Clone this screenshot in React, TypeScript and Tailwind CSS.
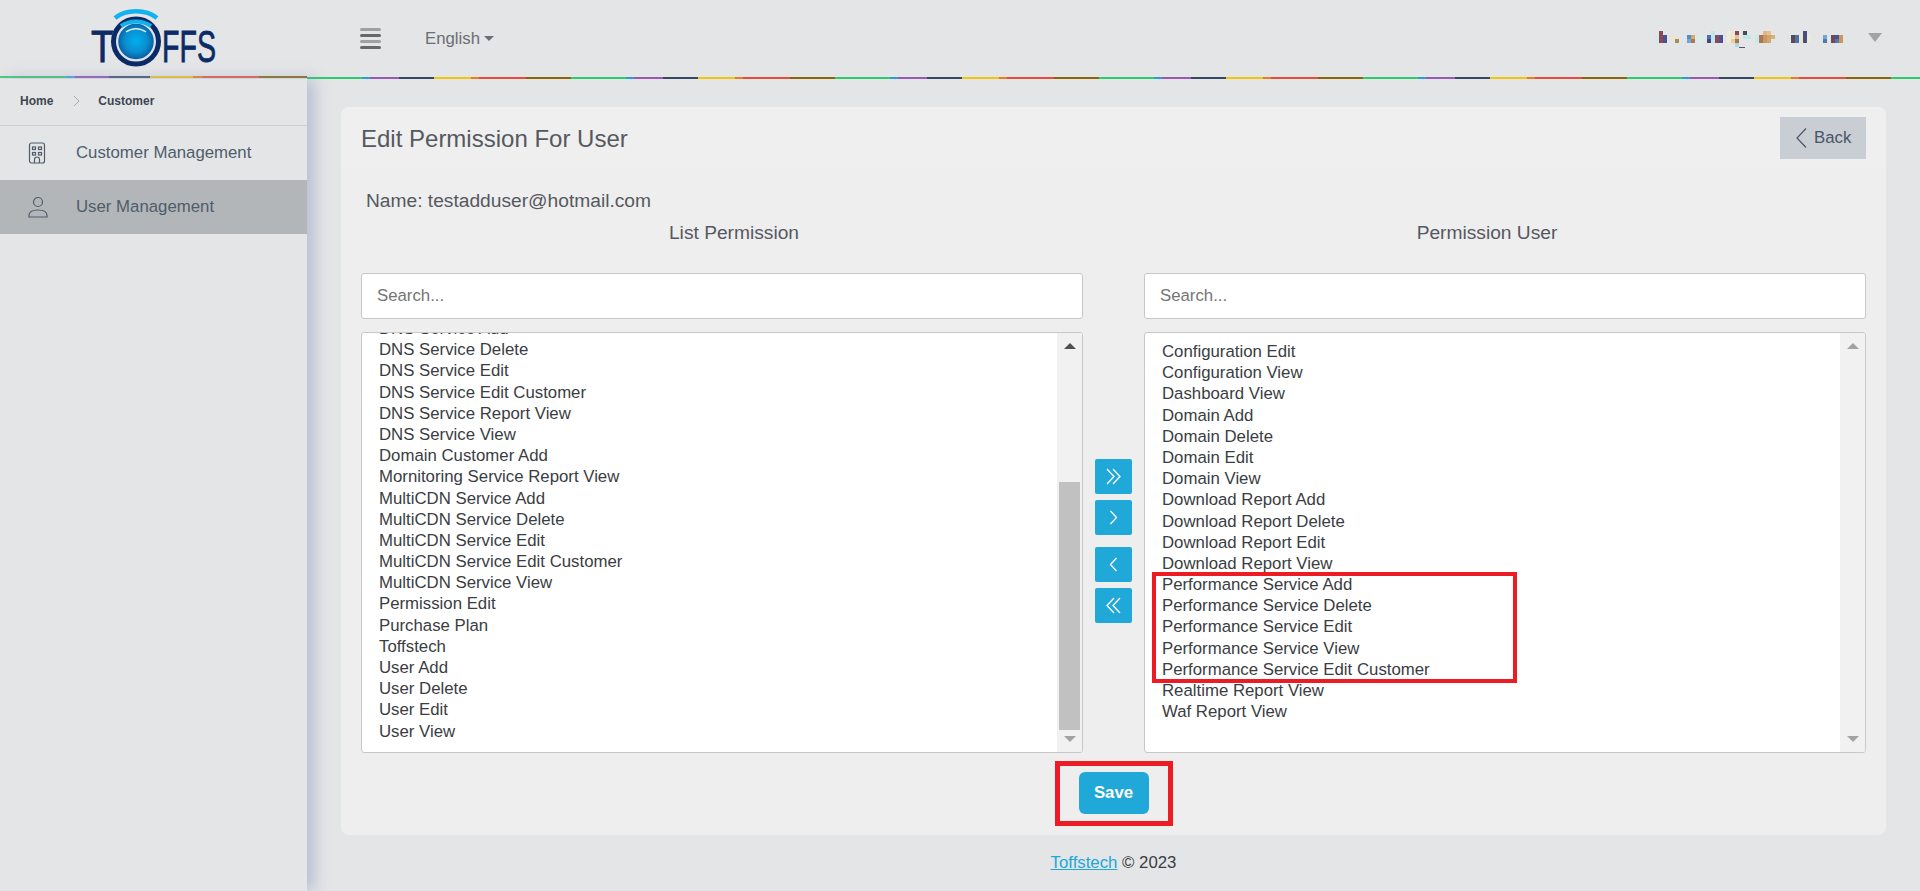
const leftItems = [
  "DNS Service Add",
  "DNS Service Delete",
  "DNS Service Edit",
  "DNS Service Edit Customer",
  "DNS Service Report View",
  "DNS Service View",
  "Domain Customer Add",
  "Mornitoring Service Report View",
  "MultiCDN Service Add",
  "MultiCDN Service Delete",
  "MultiCDN Service Edit",
  "MultiCDN Service Edit Customer",
  "MultiCDN Service View",
  "Permission Edit",
  "Purchase Plan",
  "Toffstech",
  "User Add",
  "User Delete",
  "User Edit",
  "User View",
];

const rightItems = [
  "Configuration Edit",
  "Configuration View",
  "Dashboard View",
  "Domain Add",
  "Domain Delete",
  "Domain Edit",
  "Domain View",
  "Download Report Add",
  "Download Report Delete",
  "Download Report Edit",
  "Download Report View",
  "Performance Service Add",
  "Performance Service Delete",
  "Performance Service Edit",
  "Performance Service View",
  "Performance Service Edit Customer",
  "Realtime Report View",
  "Waf Report View",
];

// blurred-out user name in the header: x, y, height, colour (each block 4px wide)
const mosaic: [number, number, number, string][] = [
  [0, 4, 8, "#d5eae8"], [4, 0, 12, "#8a4a55"], [8, 4, 8, "#4c5290"], [16, 4, 4, "#ebe8c8"], [20, 8, 4, "#a89050"],
  [32, 4, 4, "#4f8fc4"], [32, 8, 4, "#6fa8d8"], [36, 4, 4, "#d8a868"], [36, 8, 4, "#a87858"], [44, 4, 8, "#d5eef0"],
  [52, 4, 4, "#4f70b0"], [52, 8, 4, "#484878"], [56, 0, 12, "#bce8ec"], [60, 4, 8, "#8a4a58"], [64, 4, 8, "#4c5290"],
  [72, 0, 12, "#eeecd8"], [76, 0, 8, "#ece8d0"], [76, 8, 4, "#e8d098"], [80, 0, 4, "#8a4850"], [80, 4, 4, "#e8bd98"],
  [80, 8, 4, "#a87848"], [80, 12, 4, "#a8d8ec"], [88, 0, 4, "#484c50"], [88, 4, 4, "#bce8ec"], [92, 4, 4, "#bce8ec"],
  [100, 4, 8, "#c8eaec"], [104, 4, 8, "#a87858"], [108, 0, 4, "#e0b888"], [108, 4, 8, "#c89860"], [112, 0, 4, "#e8c090"],
  [112, 4, 8, "#d0a870"], [116, 4, 4, "#d8b078"], [136, 4, 4, "#505050"], [136, 8, 4, "#684850"], [140, 4, 8, "#4f70b0"],
  [144, 4, 8, "#e8e8c8"], [148, 0, 12, "#4c4c80"], [152, 4, 8, "#e8ecd8"], [168, 4, 4, "#6fa8d8"], [168, 8, 4, "#4f78a8"],
  [176, 4, 8, "#704858"], [180, 4, 4, "#4c5290"], [180, 8, 4, "#4f78b0"], [184, 4, 8, "#c89860"],
];

const Logo = () => (
  <svg width="140" height="72" viewBox="0 0 140 72" fill="none">
    <defs>
      <radialGradient id="ball" cx="50%" cy="48%" r="55%">
        <stop offset="0%" stopColor="#00aeef" />
        <stop offset="55%" stopColor="#0a8fd0" />
        <stop offset="100%" stopColor="#0b4f92" />
      </radialGradient>
    </defs>
    <text x="11" y="62" fontFamily="Liberation Sans, sans-serif" fontSize="44" fill="#0b2b66" stroke="#0b2b66" strokeWidth="0.8" textLength="23" lengthAdjust="spacingAndGlyphs">T</text>
    <text x="82" y="62" fontFamily="Liberation Sans, sans-serif" fontSize="44" fill="#0b2b66" stroke="#0b2b66" strokeWidth="0.8" textLength="54" lengthAdjust="spacingAndGlyphs">FFS</text>
    <circle cx="56" cy="41.500" r="25" fill="#e4e5e7" />
    <circle cx="56" cy="41.500" r="22.500" stroke="#0b2b66" strokeWidth="5" />
    <circle cx="56" cy="41.500" r="18.500" fill="url(#ball)" stroke="#d8e2ec" strokeWidth="1.500" />
    <path d="M46 32c6-4.500 14-4.500 20 0" stroke="#dcebf5" strokeWidth="1.500" />
    <path d="M35 18c11-9 31-9 42 0" stroke="#12b2ee" strokeWidth="4.500" />
    <path d="M41 26c9-6 21-6 30 0" stroke="#12b2ee" strokeWidth="4" />
  </svg>
);

const Arrow = ({ d }: { d: string }) => (
  <svg width="37" height="35" viewBox="0 0 37 35" fill="none" stroke="#fff" strokeWidth="1.3">
    <path d={d} />
  </svg>
);

const Scrollbar = ({ active, thumb }: { active?: boolean; thumb?: boolean }) => (
  <div className="w-[25px] shrink-0 h-full bg-[#f1f1f1] flex flex-col items-center">
    <svg width="14" height="8" viewBox="0 0 14 8" className="mt-[9px] shrink-0">
      <path d="M7 1l6 6H1z" fill={active ? "#505050" : "#a3a3a3"} />
    </svg>
    <div className="flex-1 w-full px-[2px] pt-[132px] pb-[5px] flex">
      {thumb && <div className="w-full h-full bg-[#c1c1c1]" />}
    </div>
    <svg width="14" height="8" viewBox="0 0 14 8" className="mb-[9px] shrink-0">
      <path d="M1 1h12l-6 6z" fill="#a3a3a3" />
    </svg>
  </div>
);

const ListBox = ({ items, offset, children, active }: { items: string[]; offset: string; children?: React.ReactNode; active?: boolean }) => (
  <div className="relative mt-[13px] h-[421px] bg-white border border-[#c8c8c8] rounded-[3px] flex overflow-hidden">
    <div className={`flex-1 pl-[17px] ${offset}`}>
      {items.map((item) => (
        <div key={item} className="h-[21.2px] leading-[21.2px] text-[16.8px] text-[#3a3d42] whitespace-nowrap">
          {item}
        </div>
      ))}
    </div>
    <Scrollbar active={active} thumb={active} />
    {children}
  </div>
);

const Column = ({ title, titleClass, children }: { title: string; titleClass: string; children: React.ReactNode }) => (
  <div className="w-[722px] shrink-0">
    <div className={`mt-[9px] h-[24px] leading-[24px] text-center text-[19.2px] text-[#55595f] ${titleClass}`}>{title}</div>
    <input
      placeholder="Search..."
      className="mt-[28px] w-full h-[46px] bg-white border border-[#c8c8c8] rounded-[3px] px-[15px] text-[16.8px] outline-none placeholder:text-[#757575]"
    />
    {children}
  </div>
);

const MoveButton = ({ d, className }: { d: string; className?: string }) => (
  <button className={`w-[37px] h-[35px] rounded-[2px] bg-[#20a8d8] flex items-center justify-center ${className ?? ""}`}>
    <Arrow d={d} />
  </button>
);

export default function App() {
  return (
    <div className="h-[891px] overflow-hidden bg-[#e4e5e7] font-['Liberation_Sans',Arial,sans-serif] flex flex-col">
      <header className="h-[79px] shrink-0 flex">
        <div className="w-[307px] shrink-0 h-[79px]">
          <div className="h-[76px] flex items-start pl-[80px]">
            <Logo />
          </div>
          <div className="h-[2px] bg-[linear-gradient(90deg,#4ccb80_0_21.5%,#5aa5dc_21.5%_24.4%,#9b66b8_24.4%_35.5%,#4f6278_35.5%_48.9%,#efc62f_48.9%_62.9%,#e38a3c_62.9%_66%,#e5645a_66%_84.4%,#957528_84.4%_100%)]" />
        </div>
        <div className="flex-1 flex flex-col">
          <div className="h-[77px] flex items-center pl-[53px] pr-[38px]">
            <svg width="21" height="22" viewBox="0 0 21 22" className="mb-[1px]">
              <rect y="1" width="21" height="3" rx="1.500" fill="#a0a0a0" />
              <rect y="7" width="21" height="3" rx="1.500" fill="#686868" />
              <rect y="13" width="21" height="3" rx="1.500" fill="#a0a0a0" />
              <rect y="19" width="21" height="3" rx="1.500" fill="#686868" />
            </svg>
            <span className="ml-[44px] text-[16.8px] text-[#6b6f73]">English</span>
            <svg width="10" height="5" viewBox="0 0 10 5" className="ml-[4px]">
              <path d="M0 0h10L5 5z" fill="#6b6f73" />
            </svg>
            <svg width="188" height="17" viewBox="0 0 188 17" className="ml-auto mt-[2px]">
              {mosaic.map(([x, y, h, fill]) => (
                <rect key={`${x}-${y}`} x={x} y={y} width="4" height={h} fill={fill} />
              ))}
              <rect x="84" y="16" width="6" height="1" fill="#555" />
            </svg>
            <svg width="14" height="9" viewBox="0 0 14 9" className="ml-[25px] mb-[3px]">
              <path d="M0 0h14L7 9z" fill="#a3a3a3" />
            </svg>
          </div>
          <div className="h-[2px] bg-[length:264px_2px] bg-[linear-gradient(90deg,#2ecc71_0_20.83%,#3498db_20.83%_23.86%,#9b59b6_23.86%_34.85%,#34495e_34.85%_48.1%,#f1c40f_48.1%_62.12%,#e67e22_62.12%_65.15%,#e74c3c_65.15%_82.95%,#8b6508_82.95%_100%)]" />
        </div>
      </header>

      <div className="flex-1 flex min-h-0">
        <aside className="w-[307px] shrink-0 shadow-[8px_0_14px_rgba(120,140,180,0.4)]">
          <div className="h-[47px] border-b border-[#cfd0d2] flex items-center pb-[2px] pl-[20px] text-[12px] font-bold text-[#3d4550]">
            <span>Home</span>
            <svg width="7" height="12" viewBox="0 0 7 12" fill="none" stroke="#a9adb1" className="ml-[20px]">
              <path d="M1 1l5 5-5 5" />
            </svg>
            <span className="ml-[18px]">Customer</span>
          </div>
          <div className="h-[54px] flex items-center pl-[28px] text-[16.8px] text-[#4f5d6b]">
            <svg width="18" height="22" viewBox="0 0 18 22" fill="none" stroke="#4f5d6b" strokeWidth="1.2">
              <rect x="1.500" y="1" width="15" height="20" rx="2" />
              <rect x="4.500" y="5" width="3" height="2.500" />
              <rect x="10.500" y="5" width="3" height="2.500" />
              <rect x="4.500" y="10.500" width="3" height="2.500" />
              <rect x="10.500" y="10.500" width="3" height="2.500" />
              <path d="M6.500 21v-3.500a2.500 2.500 0 0 1 5 0V21" />
            </svg>
            <span className="ml-[30px]">Customer Management</span>
          </div>
          <div className="h-[54px] bg-[#b2b6b9] flex items-center pl-[28px] text-[16.8px] text-[#4f5d6b]">
            <svg width="20" height="22" viewBox="0 0 20 22" fill="none" stroke="#4f5d6b" strokeWidth="1.2">
              <circle cx="10" cy="6" r="4.500" />
              <path d="M1 21v-1.500C1 16 4 14 10 14s9 2 9 5.500V21z" />
            </svg>
            <span className="ml-[28px]">User Management</span>
          </div>
        </aside>

        <main className="flex-1 min-w-0 pl-[34px] pr-[34px] pt-[28px]">
          <section className="h-[728px] rounded-[8px] bg-[#eeeeee] overflow-hidden flex flex-col">
            <div className="h-[61px] shrink-0 bg-[#efefef] pl-[20px] pr-[20px] pt-[10px] flex items-start justify-between">
              <h1 className="mt-[8px] text-[24px] leading-[28px] text-[#55595f]">Edit Permission For User</h1>
              <button className="w-[86px] h-[42px] bg-[#c8ced3] flex items-center pl-[16px] text-[16.8px] text-[#4a5568]">
                <svg width="11" height="20" viewBox="0 0 11 20" fill="none" stroke="#4a5568" strokeWidth="1.2">
                  <path d="M10 0.500L1 10l9 9.500" />
                </svg>
                <span className="ml-[7px]">Back</span>
              </button>
            </div>
            <div className="flex-1 px-[20px]">
              <div className="mt-[22px] h-[22px] leading-[22px] pl-[5px] text-[19.2px] text-[#55595f]">Name: testadduser@hotmail.com</div>
              <div className="flex">
                <Column title="List Permission" titleClass="pl-[24px]">
                  <ListBox items={leftItems} offset="mt-[-15px]" active />
                </Column>
                <div className="w-[61px] shrink-0 pt-[247px] flex flex-col items-center">
                  <MoveButton d="M12 10l7 7.500-7 7.500M18 10l7 7.500-7 7.500" />
                  <MoveButton className="mt-[6px]" d="M15.500 11l6 6.500-6 6.500" />
                  <MoveButton className="mt-[12px]" d="M21.500 11l-6 6.500 6 6.500" />
                  <MoveButton className="mt-[6px]" d="M19 10l-7 7.500 7 7.500M25 10l-7 7.500 7 7.500" />
                </div>
                <Column title="Permission User" titleClass="pr-[36px]">
                  <ListBox items={rightItems} offset="pt-[8px]">
                    <div className="absolute left-[7px] top-[239px] w-[365px] h-[111px] border-4 border-[#ed1c24]" />
                  </ListBox>
                </Column>
              </div>
              <div className="mt-[19px] flex justify-center">
                <div className="relative">
                  <button className="block w-[70px] h-[42px] rounded-[6px] bg-[#20a8d8] text-[16.8px] font-bold text-white">Save</button>
                  <div className="absolute -left-[24px] -right-[24px] -top-[11px] -bottom-[12px] border-[5px] border-[#ed1c24]" />
                </div>
              </div>
            </div>
          </section>
          <footer className="mt-[17px] text-center text-[16.8px] leading-[22px] text-[#3a3d42]">
            <a className="text-[#20a8d8] underline">Toffstech</a> © 2023
          </footer>
        </main>
      </div>
    </div>
  );
}
